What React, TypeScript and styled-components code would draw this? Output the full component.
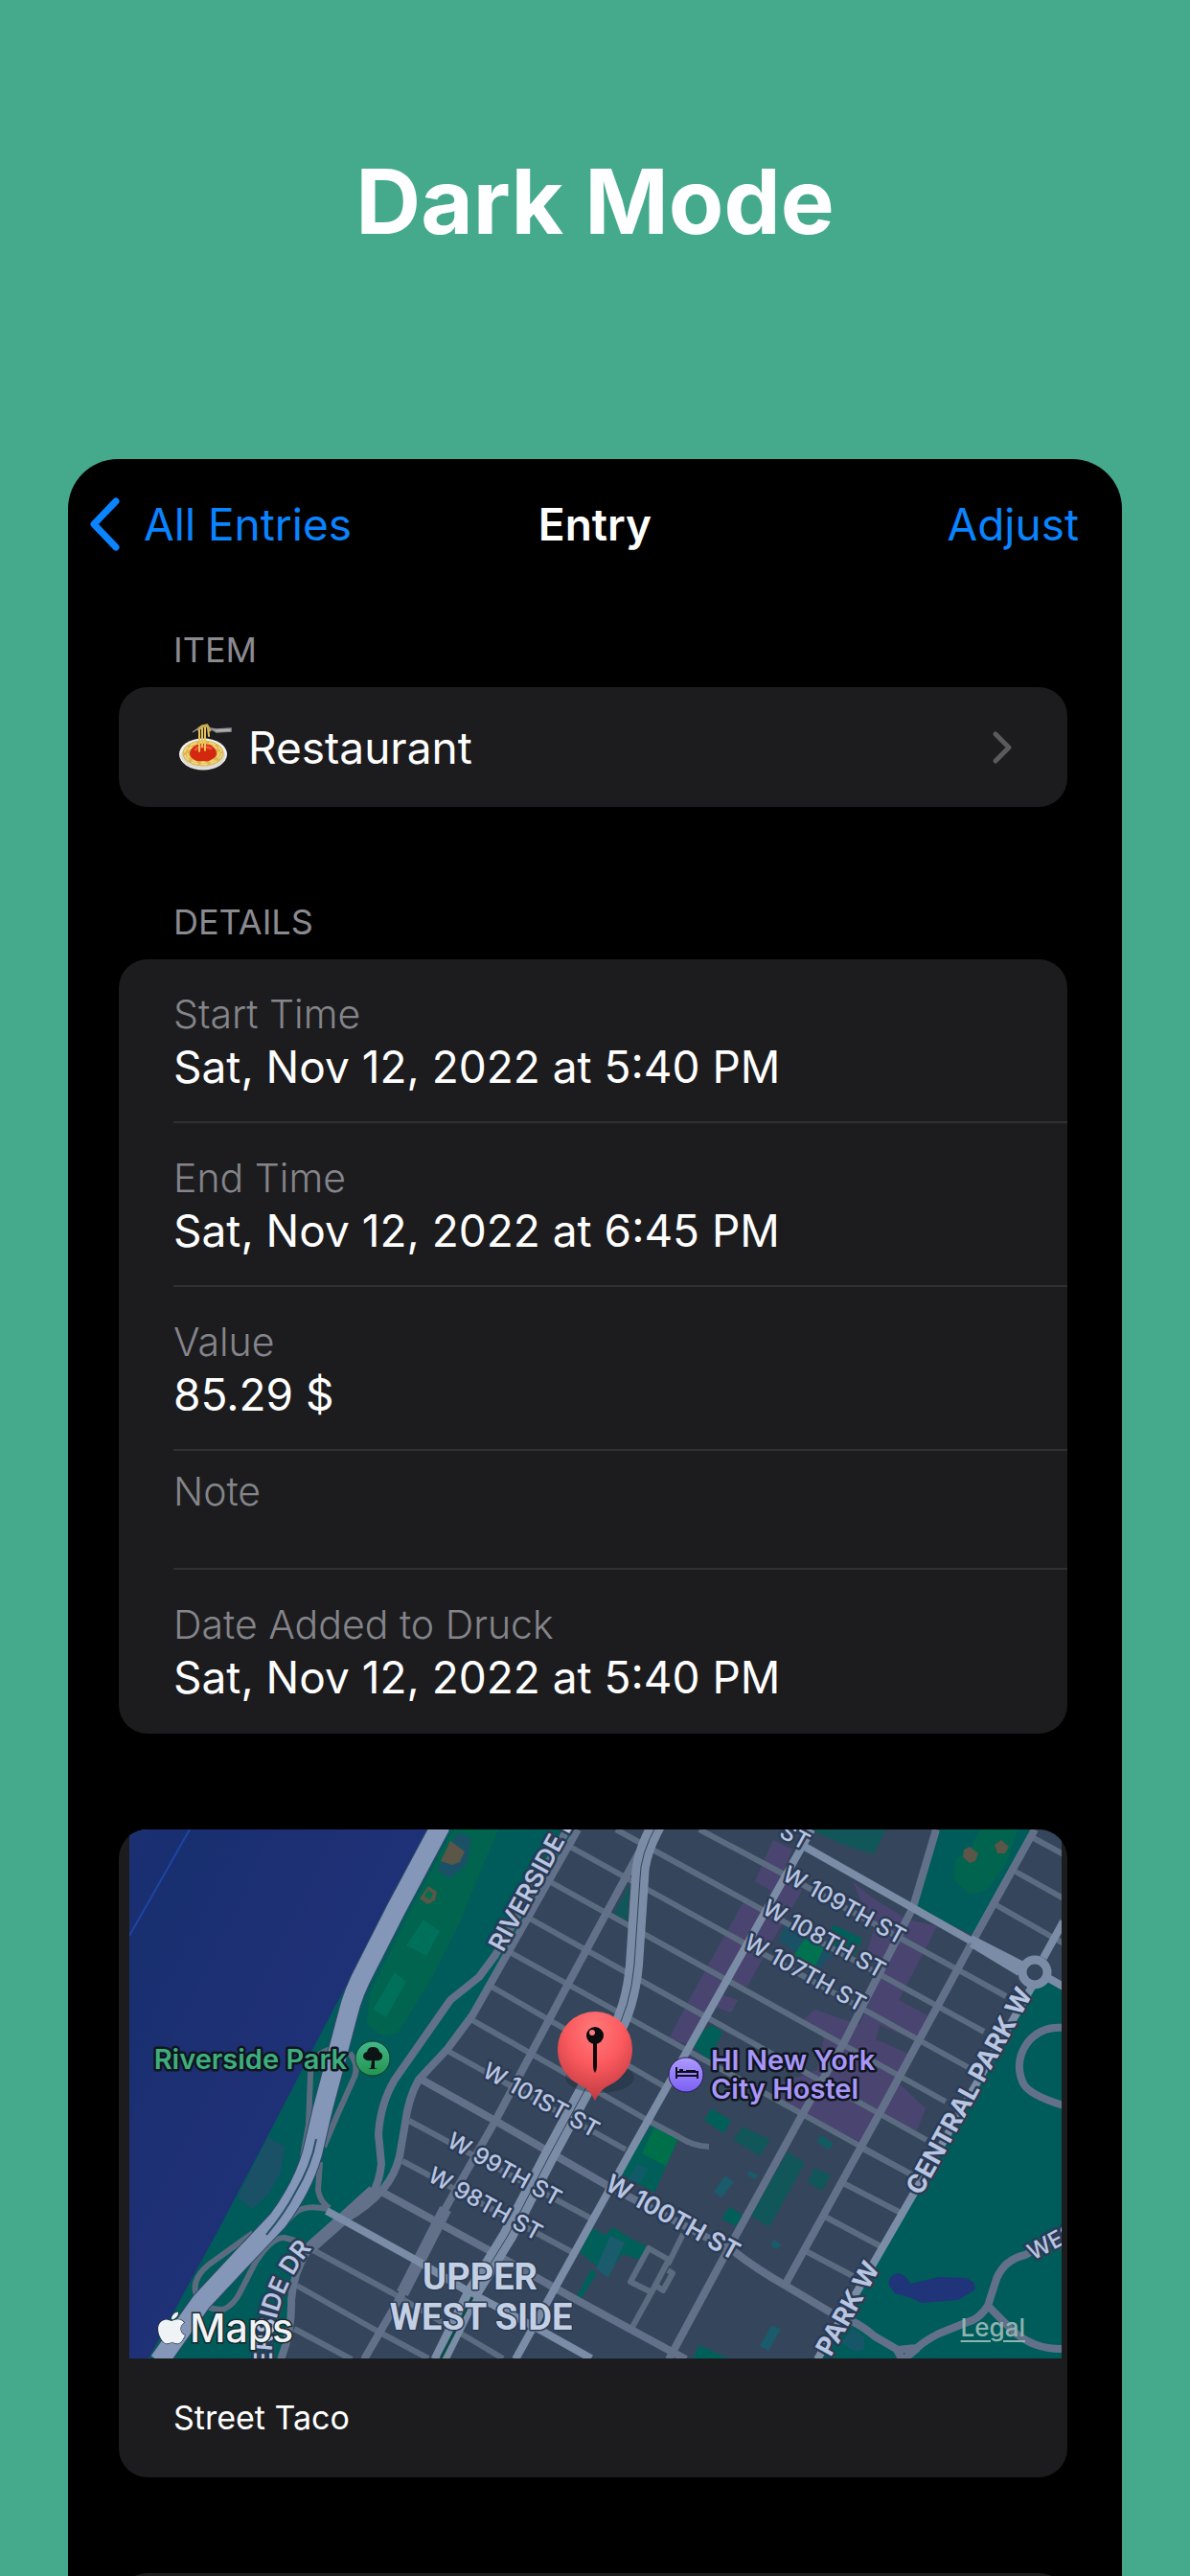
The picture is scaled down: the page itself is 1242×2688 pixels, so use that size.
import React from "react";
import styled, { createGlobalStyle } from "styled-components";
import { FaApple } from "react-icons/fa";

const GlobalStyle = createGlobalStyle`
  *, *::before, *::after { box-sizing: border-box; }
  html, body, #root { height: 100%; }
  body {
    margin: 0;
    background: #45aa8c;
    font-family: Inter, "Liberation Sans", sans-serif;
    -webkit-font-smoothing: antialiased;
  }
  h1, h2, h3, dl, dt, dd, p { margin: 0; font-weight: 400; }
`;

const Page = styled.div`
  height: 100vh;
  display: flex;
  flex-direction: column;
  overflow: hidden;
  background: #45aa8c;
`;

const Hero = styled.header`
  flex: none;
  height: 479px;
  padding-top: 150px;
`;

const HeroTitle = styled.h1`
  color: #fff;
  font-size: 94px;
  line-height: 120px;
  font-weight: 700;
  text-align: center;
`;

const Screen = styled.main`
  flex: 1;
  min-height: 0;
  margin: 0 71px;
  overflow: hidden;
  display: flex;
  flex-direction: column;
  background: #000;
  border-radius: 52px 52px 0 0;
`;

const NavBar = styled.nav`
  flex: none;
  height: 136px;
  padding: 0 22px;
  display: grid;
  grid-template-columns: 1fr auto 1fr;
  align-items: center;
`;

const NavButton = styled.button<{ $end?: boolean }>`
  justify-self: ${(p) => (p.$end ? "end" : "start")};
  display: flex;
  align-items: center;
  gap: 25px;
  padding: ${(p) => (p.$end ? "0 23px 0 0" : "0")};
  border: 0;
  background: none;
  color: #0a84ff;
  font: inherit;
  font-size: 46px;
  line-height: 56px;
  cursor: pointer;
`;

const NavTitle = styled.h2`
  color: #fff;
  font-size: 46px;
  line-height: 56px;
  font-weight: 600;
`;

const Content = styled.div`
  flex: none;
  padding: 0 57px 0 53px;
  display: flex;
  flex-direction: column;
`;

const SectionTitle = styled.h3<{ $first?: boolean }>`
  padding: ${(p) => (p.$first ? "41px" : "98px")} 57px 17px;
  color: #8a8a90;
  font-size: 36px;
  line-height: 44px;
`;

const Card = styled.section<{ $spaced?: boolean }>`
  margin-top: ${(p) => (p.$spaced ? "100px" : "0")};
  border-radius: 30px;
  background: #1c1c1e;
  overflow: hidden;
`;

const ItemButton = styled.button`
  width: 100%;
  height: 125px;
  padding: 0 57px 0 62px;
  display: flex;
  align-items: center;
  gap: 15px;
  border: 0;
  background: none;
  color: #fff;
  font: inherit;
  font-size: 46px;
  line-height: 56px;
  text-align: left;
  cursor: pointer;
`;

const ItemName = styled.span`
  flex: 1;
`;

const DetailRow = styled.div<{ $short?: boolean }>`
  margin-left: 57px;
  padding-top: ${(p) => (p.$short ? "15px" : "30px")};
  height: ${(p) => (p.$short ? "124px" : "171px")};
  border-bottom: 2px solid #303033;
  &:last-child { border-bottom: 0; }
`;

const DetailLabel = styled.dt`
  color: #85858b;
  font-size: 41px;
  line-height: 54px;
  font-weight: 300;
`;

const DetailValue = styled.dd`
  color: #fff;
  font-size: 46px;
  line-height: 56px;
`;

const MapFrame = styled.div`
  position: relative;
  margin: 0 6px 0 11px;
`;

const MapSvg = styled.svg`
  display: block;
  width: 100%;
  height: 552px;
  font-family: Inter, "Liberation Sans", sans-serif;
`;

const Attribution = styled.div`
  position: absolute;
  left: 25px;
  right: 38px;
  bottom: 8px;
  display: flex;
  align-items: center;
  justify-content: space-between;
`;

const Brand = styled.span`
  display: flex;
  align-items: center;
  color: #f0f3f5;
  font-size: 41px;
  line-height: 48px;
  font-weight: 500;
  paint-order: stroke;
  -webkit-text-stroke: 3px #16282c;
  svg { stroke: #16282c; stroke-width: 14px; paint-order: stroke; overflow: visible; }
`;

const LegalLink = styled.a`
  color: #8fb3b1;
  font-size: 26px;
  line-height: 32px;
  font-weight: 500;
  text-decoration: underline;
  text-decoration-thickness: 2px;
  text-underline-offset: 4px;
`;

const PlaceName = styled.p`
  padding: 0 57px;
  color: #fff;
  font-size: 34px;
  line-height: 124px;
`;

const NextCard = styled.section`
  height: 124px;
  margin-top: 100px;
  border-radius: 30px;
  background: #1c1c1e;
`;

function BackChevron() {
  return (
    <svg width="32" height="56" viewBox="0 0 32 56" fill="none" stroke="#0a84ff" strokeWidth="7" strokeLinecap="round" strokeLinejoin="round" aria-hidden="true">
      <path d="M28 4 L5 28 L28 52" />
    </svg>
  );
}

function ForwardChevron() {
  return (
    <svg width="22" height="36" viewBox="0 0 22 36" fill="none" stroke="#5a5a5e" strokeWidth="5" strokeLinecap="round" strokeLinejoin="round" aria-hidden="true">
      <path d="M4 4 L18 18 L4 32" />
    </svg>
  );
}

function Spaghetti() {
  return (
    <svg width="58" height="50" viewBox="0 0 58 50" fill="none" aria-hidden="true">
      <ellipse cx="26" cy="32" rx="25" ry="16.500" fill="#f2f1ef" />
      <ellipse cx="26" cy="33.500" rx="23" ry="14" fill="#dcdad6" />
      <ellipse cx="26" cy="31" rx="21.500" ry="13.500" fill="#dcb64f" />
      <g stroke="#f3dc86" strokeWidth="1.500">
        <ellipse cx="26" cy="31" rx="19.500" ry="11.500" strokeDasharray="7 3" />
        <ellipse cx="26" cy="31" rx="16.500" ry="9.500" strokeDasharray="5 4" />
      </g>
      <path d="M12 31c1-6 7-10 14-10s14 4 14 10c0 4-3 5-6 7s-5 1-8 1-6 1-9-1-5-4-5-7z" fill="#d3280f" />
      <path d="M18 27c3-3 11-4 16-1" stroke="#f0522e" strokeWidth="3" strokeLinecap="round" />
      <path d="M22 5v24M25 4v20M28 4v24M31 4l1 9" stroke="#e8c35a" strokeWidth="2" strokeLinecap="round" />
      <path d="M21 6l4-3 5-1 3 5" stroke="#c9ad55" strokeWidth="3" strokeLinecap="round" />
      <path d="M15 9l6-4M33 5l7 1 15-1v3l-15 1z" stroke="#8f8f8f" strokeWidth="1.500" fill="#b9b9b9" />
    </svg>
  );
}

const minorStreets = [
  "M730 1909 L813 1953 L1050 2083",
  "M643 1909 L1027 2120",
  "M595 1927 L1010 2157",
  "M573 1963 L987 2193",
  "M553 2002 L967 2233",
  "M532 2037 L953 2270",
  "M513 2073 L693 2177",
  "M493 2108 L677 2213 L707 2229 Q724 2240 740 2240",
  "M467 2140 L653 2243",
  "M427 2213 L617 2315",
  "M420 2255 L597 2350",
  "M327 2348 L410 2393 L525 2461",
  "M310 2385 L393 2432 L447 2461",
  "M307 2430 L367 2462",
  "M897 2240 L953 2270",
  "M880 2278 L940 2309",
  "M861 2313 L921 2345",
  "M841 2349 L890 2375",
  "M1077 1917 L1110 1935",
  "M1060 1953 L1110 1981",
  "M1040 1988 L1110 2028",
  "M713 2331 L697 2363 M677 2346 L698 2358 L680 2392 L658 2381 Z M697 2369 L702 2372 L692 2390 L686 2386 M680 2392 L659 2430",
];

const midStreets = [
  "M603 1909 L493 2103 L467 2138 L437 2170 Q426 2190 423 2215 L417 2250 Q412 2270 400 2284 Q385 2302 360 2316 L320 2350 Q306 2372 304 2400 Q305 2432 293 2462",
  "M667 1933 L593 2070 L517 2213 L460 2313 L420 2393 L380 2462",
  "M977 1909 L953 1990 L880 2133 L837 2207 L753 2360 L698 2462",
  "M1080 1909 L1020 2017 L957 2133 L917 2207 L820 2383",
  "M440 2170 L517 2213 L633 2280 L767 2350 Q790 2368 820 2385 L867 2413",
  "M400 2288 L510 2348 L580 2388 L657 2430 L716 2462",
  "M592 1909 L517 2040 L500 2063 L470 2087 L440 2130 L412 2170 Q397 2195 395 2227 L398 2258 Q396 2278 387 2292",
  "M1110 2116 Q1086 2114 1072 2132 Q1058 2152 1068 2174 Q1074 2186 1110 2197",
  "M887 2421 Q900 2427 913 2438 L937 2452 L957 2450 Q966 2442 980 2435 L1010 2423 Q1022 2420 1031 2406 L1040 2378 Q1048 2358 1070 2353 L1110 2332",
  "M1031 2406 L1058 2433 Q1080 2452 1110 2451",
  "M935 2450 L942 2463 L958 2450",
];

const rampRoads = [
  "M365 2142 Q375 2155 370 2167 L352 2207 L338 2240",
  "M346 2138 Q324 2144 324 2165 L322 2217 L316 2250",
  "M334 2256 L332 2285 Q334 2298 344 2304",
  "M342 2305 Q318 2300 308 2309 L282 2335",
  "M264 2330 L218 2363 Q201 2377 204 2392 Q208 2410 233 2410 Q244 2405 250 2393 L267 2360 Q284 2334 297 2335 L308 2338",
];

const majorStreets = [
  "M847 1909 L837 1927 L657 2247 L538 2462",
  "M840 1927 L1013 2025",
  "M1013 2023 L1066 2050 M1014 2028 L1064 2058",
  "M1094 2064 L1110 2073 M1089 2043 L1110 2005",
  "M341 2307 L437 2360 L490 2392 L567 2433 L617 2461",
  "M1077 2073 L953 2290 L897 2387 L853 2462",
];

const highway =
  "M460 1905 L413 1993 L383 2052 Q368 2080 363 2102 L353 2140 L337 2200 L326 2247 Q316 2282 290 2317 L253 2356 L210 2402 L166 2464";

const purpleZones = [
  "807,1920 827,1930 817,1953 837,1973 807,2023 780,2073 760,2067 717,2133 698,2127 730,2067 777,1983 797,1990 805,1973 788,1963",
  "890,1963 910,1980 947,2003 978,2010 938,2087 968,2103 957,2130 918,2113 914,2128 948,2143 937,2173 966,2200 957,2223 920,2207 897,2235 843,2207 820,2200 805,2177 853,2160 860,2127 840,2107 850,2097 897,2113 920,2060 905,2037 913,2010 900,1987",
  "747,2080 770,2087 763,2100 743,2093",
];

const greenZones: Array<[string, string]> = [
  ["#00644f", "473,1909 520,1909 480,2005 450,2065 416,2120 400,2125 383,2112 386,2080 425,2000"],
  ["#00705a", "442,2003 459,2015 445,2041 424,2030"],
  ["#00705a", "412,2058 424,2068 403,2105 389,2097"],
  ["#1a5167", "478,1912 492,1918 487,1945 470,1960 456,1952 470,1925"],
  ["#5b5647", "470,1921 485,1932 480,1943 472,1946 460,1942"],
  ["#5b5647", "447,1968 456,1974 454,1983 446,1987 438,1981"],
  ["#00704c", "447,1972 452,1976 449,1982 443,1979"],
  ["#1a5167", "280,2230 297,2240 293,2267 280,2290 263,2305 248,2293 263,2263 270,2250"],
  ["#115658", "847,1909 925,1909 912,1935 880,1925 850,1911"],
  ["#115658", "657,1965 655,2004 640,1998"],
  ["#006059", "870,2008 900,2023 890,2043 863,2030"],
  ["#1a5167", "820,2007 868,2040 855,2055 813,2025"],
  ["#00724f", "840,2023 860,2033 850,2053 827,2043"],
  ["#006059", "743,2113 754,2120 747,2137 740,2150 722,2135 730,2122"],
  ["#006059", "743,2200 763,2213 755,2226 735,2212"],
  ["#115658", "775,2219 804,2233 793,2250 765,2233"],
  ["#006059", "680,2217 708,2232 683,2288 647,2268"],
  ["#00704a", "683,2220 707,2233 695,2260 670,2247"],
  ["#115b68", "665,2258 676,2263 668,2278 656,2273"],
  ["#115658", "822,2245 840,2257 803,2324 783,2312"],
  ["#115658", "850,2262 867,2270 858,2286 843,2277"],
  ["#006059", "762,2303 776,2312 768,2323 753,2315"],
  ["#115b62", "857,2228 870,2237 865,2243 853,2235"],
  ["#1a5b6c", "757,2270 766,2277 753,2293 745,2287"],
  ["#1a5b6c", "782,2265 791,2270 787,2274 780,2269"],
  ["#1a5b6c", "808,2337 816,2343 810,2347 804,2342"],
  ["#1a5b6c", "805,2427 815,2430 802,2453 793,2448"],
  ["#006059", "730,2447 760,2461 723,2461"],
  ["#006059", "618,2325 632,2332 640,2324 657,2335 677,2345 667,2358 650,2352 633,2373 605,2350"],
  ["#1a5b6c", "637,2333 652,2340 635,2377 622,2367"],
  ["#006059", "617,2368 623,2372 607,2398 601,2397"],
];

const streetLabels: Array<[string, number, number]> = [
  ["ST", 812, 1916],
  ["W 109TH ST", 815, 1961],
  ["W 108TH ST", 794, 1996],
  ["W 107TH ST", 775, 2032],
  ["W 101ST ST", 502, 2166],
  ["W 99TH ST", 465, 2239],
  ["W 98TH ST", 445, 2275],
];

function NeighborhoodMap() {
  return (
    <MapSvg viewBox="135 1909 973 552" preserveAspectRatio="xMidYMid slice" role="img" aria-label="Map of the Upper West Side">
      <defs>
        <radialGradient id="pin" cx="50%" cy="22%" r="75%">
          <stop offset="0" stopColor="#ff7a7c" />
          <stop offset="0.500" stopColor="#fb5a5e" />
          <stop offset="1" stopColor="#c43c42" />
        </radialGradient>
        <linearGradient id="tree" x1="0" y1="0" x2="0" y2="1">
          <stop offset="0" stopColor="#42b88b" />
          <stop offset="1" stopColor="#259450" />
        </linearGradient>
        <linearGradient id="bed" x1="0" y1="0" x2="0" y2="1">
          <stop offset="0" stopColor="#ad9bff" />
          <stop offset="1" stopColor="#7c5ff5" />
        </linearGradient>
        <linearGradient id="water" x1="0" y1="0" x2="1" y2="0.600">
          <stop offset="0" stopColor="#212f74" />
          <stop offset="0.350" stopColor="#182f70" />
          <stop offset="0.600" stopColor="#1f3075" />
          <stop offset="1" stopColor="#1c357c" />
        </linearGradient>
        <path id="riverside" d="M284 2560 L284 2450 Q288 2392 326 2346" />
      </defs>

      <rect x="0" y="1800" width="1400" height="800" fill="#35465c" />
      <path d="M0 1909 H603 L493 2103 L467 2138 L437 2170 L423 2210 L417 2253 L400 2284 L357 2317 L320 2350 L305 2383 L303 2417 L293 2461 H0 Z" fill="#005c5a" />
      <path d="M0 1909 H452 L391 2020 L350 2093 L270 2247 L230 2323 L155 2461 H0 Z" fill="url(#water)" />
      <path d="M135 2020 L198 1909" stroke="#1d46a0" strokeWidth="2" />
      <path d="M980 1909 H1077 L1017 2020 L955 1990 Z" fill="#005c5a" />
      <path d="M1023 1909 H1062 L1050 1945 L1030 1972 L1012 1977 L995 1960 L997 1940 L1012 1930 Z" fill="#00644f" />
      <path d="M1006 1930 L1012 1927 L1021 1934 L1018 1942 L1012 1944 L1005 1938 Z M1038 1925 L1045 1920 L1053 1927 L1049 1934 L1041 1934 Z" fill="#5b5647" />
      <path d="M1080 2066 L1400 2073 V2461 H853 Z" fill="#005c5a" />
      <path d="M928 2385 Q926 2374 938 2372 Q946 2374 950 2383 L980 2376 L1008 2377 Q1018 2380 1018 2389 L1000 2400 L962 2403 Q948 2396 934 2393 Z" fill="#1f3479" />
      <path d="M890 2430 L902 2438 L902 2452 L892 2454 L878 2444 Z" fill="#155768" />

      {purpleZones.map((points) => (
        <polygon key={points} points={points} fill="#4a4570" />
      ))}
      {greenZones.map(([fill, points]) => (
        <polygon key={points} points={points} fill={fill} />
      ))}

      <g fill="none" strokeLinejoin="round">
        <g stroke="#5c6c80" strokeWidth="6">
          {minorStreets.map((d) => <path key={d} d={d} />)}
          {rampRoads.map((d) => <path key={d} d={d} />)}
        </g>
        <g stroke="#627189" strokeWidth="8">
          {midStreets.map((d) => <path key={d} d={d} />)}
        </g>
        <path d="M390 2286 L357 2316 L322 2347 M465 2305 L420 2393" stroke="#627189" strokeWidth="13" />
        <path d={highway} stroke="#2c4a66" strokeWidth="22" />
        <path d={highway} stroke="#8497b8" strokeWidth="20" />
        <path d="M330 2232 Q325 2260 308 2288 Q298 2308 278 2332" stroke="#2c5068" strokeWidth="2" />
        <g stroke="#7b8da6" strokeWidth="8">
          {majorStreets.map((d) => <path key={d} d={d} />)}
        </g>
        <path d="M686 1903 Q668 1935 668 1960 L662 2050 Q658 2095 640 2125 L607 2187 L573 2250 L530 2333 L493 2393 L458 2464" stroke="#7b8da6" strokeWidth="18" />
        <path d="M686 1903 Q668 1935 668 1960 L662 2050 Q658 2095 640 2125 L607 2187 L573 2250 L530 2333 L512 2362" stroke="#304456" strokeWidth="1" />
        <path d="M493 2397 L460 2461" stroke="#0b4b48" strokeWidth="3" />
        <circle cx="1080" cy="2058" r="13" stroke="#7b8da6" strokeWidth="9" fill="#35465c" />
      </g>

      <g fill="#b9c6e2" stroke="#2c3b55" strokeWidth="5" strokeLinejoin="round" style={{ paintOrder: "stroke" }}>
        <g fontSize="24" fontWeight="500">
          {streetLabels.map(([label, x, y]) => (
            <text key={label + x} transform={`translate(${x} ${y}) rotate(29)`}>{label}</text>
          ))}
          <text transform="translate(1078 2359) rotate(-28)">WEST DR</text>
        </g>
        <g fontSize="26" fontWeight="600">
          <text transform="translate(630 2284) rotate(29)">W 100TH ST</text>
          <text transform="translate(525 2038) rotate(-61)">RIVERSIDE DR</text>
          <text textAnchor="end"><textPath href="#riverside" startOffset="100%">RIVERSIDE DR</textPath></text>
        </g>
        <g fontSize="27" fontWeight="700">
          <text transform="translate(961 2292) rotate(-61)">CENTRAL PARK W</text>
          <text transform="translate(867 2460) rotate(-61)">PARK W</text>
        </g>
        <g fontSize="38" fontWeight="700" fill="#c3d0e4" textAnchor="middle" strokeWidth="3" fontFamily="Roboto, sans-serif">
          <text x="501" y="2389">UPPER</text>
          <text x="502" y="2431">WEST SIDE</text>
        </g>
      </g>

      <g fontSize="29" fontWeight="600" stroke="#10151f" strokeWidth="5" strokeLinejoin="round" style={{ paintOrder: "stroke" }}>
        <text x="362" y="2159" fill="#3fae7e" textAnchor="end">Riverside Park</text>
        <text x="742" y="2160" fill="#a897f8">HI New York</text>
        <text x="742" y="2190" fill="#a897f8">City Hostel</text>
      </g>

      <circle cx="389" cy="2148" r="18" fill="url(#tree)" stroke="#123a30" strokeWidth="1" />
      <path d="M387 2158 L388 2150 Q380 2151 379 2146 Q379 2142 383 2141 Q384 2136 389 2136 Q395 2136 396 2141 Q400 2143 399 2147 Q397 2151 391 2150 L391 2158 L394 2159 H384 Z" fill="#0c1416" />
      <circle cx="716" cy="2165" r="18" fill="url(#bed)" stroke="#241d4a" strokeWidth="1" />
      <path d="M706 2157 V2169 M706 2166 H728 V2169 M706 2162 H728 V2166 M709 2160 H713 M716 2161 H726" stroke="#0f0f1c" strokeWidth="2" fill="none" />

      <ellipse cx="626" cy="2168" rx="36" ry="16" fill="#1d2634" opacity="0.350" />
      <path d="M621 2099 A39 39 0 0 1 660 2138 C660 2157 649 2170 634 2177 C628 2180 624 2186 621 2192 C618 2186 614 2180 608 2177 C593 2170 582 2157 582 2138 A39 39 0 0 1 621 2099 Z" fill="url(#pin)" />
      <path d="M619 2130 H623 V2156 Q623 2160 621 2163 Q619 2160 619 2156 Z" fill="#0b0b0d" />
      <circle cx="621" cy="2124" r="9" fill="#0b0b0d" />
      <circle cx="618" cy="2121" r="3" fill="#ff7b7c" />
    </MapSvg>
  );
}

interface Detail {
  label: string;
  value?: string;
}

const details: Detail[] = [
  { label: "Start Time", value: "Sat, Nov 12, 2022 at 5:40 PM" },
  { label: "End Time", value: "Sat, Nov 12, 2022 at 6:45 PM" },
  { label: "Value", value: "85.29 $" },
  { label: "Note" },
  { label: "Date Added to Druck", value: "Sat, Nov 12, 2022 at 5:40 PM" },
];

export default function App() {
  return (
    <>
      <GlobalStyle />
      <Page>
        <Hero>
          <HeroTitle>Dark Mode</HeroTitle>
        </Hero>
        <Screen>
          <NavBar>
            <NavButton type="button">
              <BackChevron />
              All Entries
            </NavButton>
            <NavTitle>Entry</NavTitle>
            <NavButton type="button" $end>Adjust</NavButton>
          </NavBar>
          <Content>
            <SectionTitle $first>ITEM</SectionTitle>
            <Card>
              <ItemButton type="button">
                <Spaghetti />
                <ItemName>Restaurant</ItemName>
                <ForwardChevron />
              </ItemButton>
            </Card>
            <SectionTitle>DETAILS</SectionTitle>
            <Card as="dl">
              {details.map((d) => (
                <DetailRow key={d.label} $short={!d.value}>
                  <DetailLabel>{d.label}</DetailLabel>
                  {d.value && <DetailValue>{d.value}</DetailValue>}
                </DetailRow>
              ))}
            </Card>
            <Card $spaced>
              <MapFrame>
                <NeighborhoodMap />
                <Attribution>
                  <Brand>
                    <FaApple size={38} aria-hidden="true" />
                    Maps
                  </Brand>
                  <LegalLink href="#legal">Legal</LegalLink>
                </Attribution>
              </MapFrame>
              <PlaceName>Street Taco</PlaceName>
            </Card>
            <NextCard />
          </Content>
        </Screen>
      </Page>
    </>
  );
}
